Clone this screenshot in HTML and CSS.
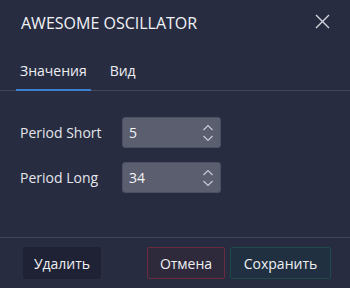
FILE: index.html
```html
<!DOCTYPE html>
<html lang="ru">

<head>
    <meta charset="UTF-8">
    <meta name="viewport" content="width=device-width, initial-scale=1.0">
    <title>Awesome Oscillator</title>
    <link rel="stylesheet" href="styles.css">
</head>

<body>

    <div class="dialog">
        <div class="dialog-header">
            <div class="dialog-title">Awesome Oscillator</div>
            <button class="close-btn" aria-label="Закрыть">
                <svg width="15" height="15" viewBox="0 0 15 15">
                    <path d="M1 1 L14 14 M14 1 L1 14" stroke="#d4d6de" stroke-width="1.4" fill="none" />
                </svg>
            </button>
        </div>

        <div class="tabs">
            <div class="tab active">Значения</div>
            <div class="tab">Вид</div>
        </div>

        <div class="form">
            <div class="form-row">
                <label class="form-label">Period Short</label>
                <div class="number-input">
                    <span class="number-value">5</span>
                    <svg class="spinner" width="12" height="20" viewBox="0 0 12 20">
                        <path d="M1.5 7 L6 2.5 L10.5 7" stroke="#c9cbd4" stroke-width="1.2" fill="none" />
                        <path d="M1.5 13 L6 17.5 L10.5 13" stroke="#c9cbd4" stroke-width="1.2" fill="none" />
                    </svg>
                </div>
            </div>
            <div class="form-row">
                <label class="form-label">Period Long</label>
                <div class="number-input">
                    <span class="number-value">34</span>
                    <svg class="spinner" width="12" height="20" viewBox="0 0 12 20">
                        <path d="M1.5 7 L6 2.5 L10.5 7" stroke="#c9cbd4" stroke-width="1.2" fill="none" />
                        <path d="M1.5 13 L6 17.5 L10.5 13" stroke="#c9cbd4" stroke-width="1.2" fill="none" />
                    </svg>
                </div>
            </div>
        </div>

        <div class="dialog-footer">
            <button class="btn btn-delete">Удалить</button>
            <div class="footer-right">
                <button class="btn btn-cancel">Отмена</button>
                <button class="btn btn-save">Сохранить</button>
            </div>
        </div>
    </div>

</body>

</html>
```

FILE: styles.css
```css
*,
*::before,
*::after {
    box-sizing: border-box;
    font-family: "Open Sans", "Noto Sans", sans-serif;
    font-weight: normal;
}

body {
    margin: 0;
    padding: 0;
    background-color: #282c41;
}

.dialog {
    width: 350px;
    height: 288px;
    display: flex;
    flex-direction: column;
    background-color: #282c41;
    color: #eceef3;
}

.dialog-header {
    display: flex;
    justify-content: space-between;
    align-items: flex-start;
    padding: 12px 20px 0 21px;
}

.dialog-title {
    font-size: 16px;
    line-height: 22px;
    text-transform: uppercase;
    color: #f2f3f7;
}

.close-btn {
    border: none;
    background: none;
    padding: 0;
    margin-top: 2px;
    width: 15px;
    height: 15px;
    cursor: pointer;
}

.close-btn svg {
    display: block;
}

.tabs {
    display: flex;
    gap: 15px;
    margin-top: 27px;
    padding-left: 16px;
    border-bottom: 1px solid #41465b;
}

.tab {
    font-size: 14px;
    line-height: 20px;
    padding: 0 4px 8px;
    margin-bottom: -1px;
    border-bottom: 2px solid transparent;
    color: #eceef3;
}

.tab.active {
    border-bottom-color: #3b7fd0;
}

.form {
    display: flex;
    flex-direction: column;
    gap: 14px;
    padding: 26px 0 0 20px;
}

.form-row {
    display: flex;
    align-items: center;
}

.form-label {
    width: 102px;
    font-size: 14px;
    color: #e4e6ec;
}

.number-input {
    width: 99px;
    height: 31px;
    display: flex;
    align-items: center;
    justify-content: space-between;
    padding: 0 6px 0 6px;
    background-color: #5b5e6f;
    border: 1px solid #4c5063;
    border-radius: 3px;
}

.number-value {
    font-size: 14px;
    color: #f4f5f8;
}

.spinner {
    display: block;
}

.dialog-footer {
    margin-top: auto;
    display: flex;
    justify-content: space-between;
    align-items: center;
    padding: 9px 19px 9px 23px;
    border-top: 1px solid #41465b;
}

.footer-right {
    display: flex;
    gap: 5px;
}

.btn {
    height: 32px;
    font-size: 14px;
    color: #eef0f4;
    border-radius: 2px;
    cursor: pointer;
}

.btn-delete {
    width: 78px;
    background-color: #1f2234;
    border: 1px solid #1f2234;
}

.btn-cancel {
    width: 78px;
    background-color: #2e2a3b;
    border: 1px solid #6a2b3e;
}

.btn-save {
    width: 101px;
    background-color: #213041;
    border: 1px solid #1f4a4a;
}
```
